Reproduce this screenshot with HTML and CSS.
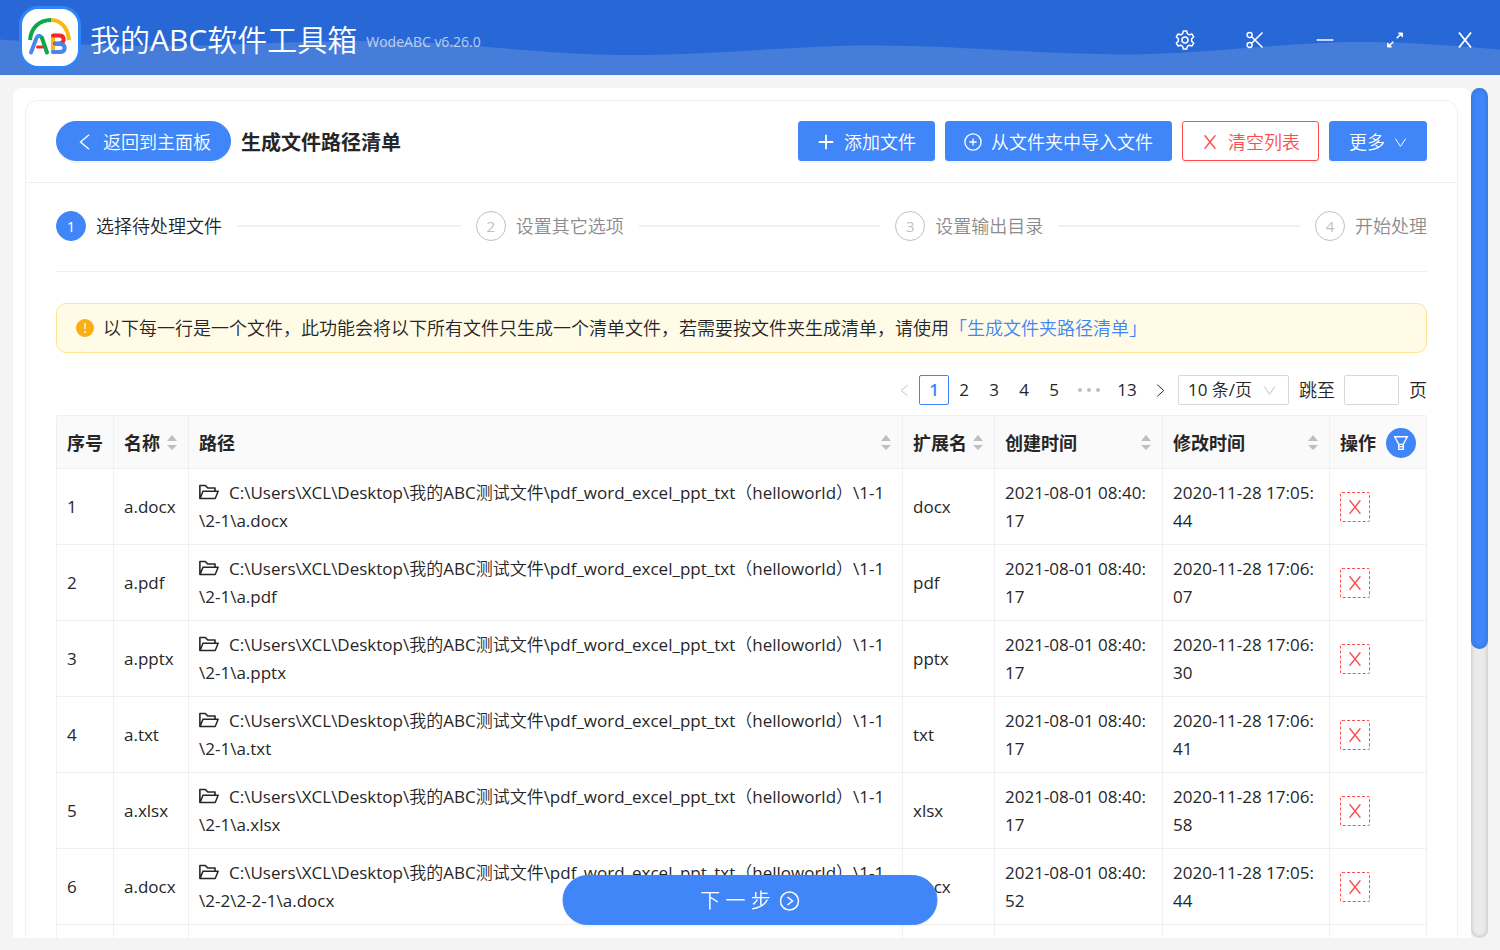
FILE: index.html
```html
<!DOCTYPE html>
<html lang="zh-CN">
<head>
<meta charset="UTF-8">
<meta name="viewport" content="width=device-width, initial-scale=1.0">
<title>我的ABC软件工具箱</title>
<link rel="stylesheet" href="styles.css">
</head>
<body>
    <!-- shared icons -->
    <svg class="sprite" aria-hidden="true">
        <symbol id="i-close" viewBox="0 0 20 20"><path d="M4 2.500l12 15M16 2.500L4 17.500" /></symbol>
        <symbol id="i-left" viewBox="0 0 20 20"><path d="M14.500 2L5 10l9.500 8" /></symbol>
        <symbol id="i-right" viewBox="0 0 20 20"><path d="M5 1l10 9-10 9" /></symbol>
        <symbol id="i-down" viewBox="0 0 20 20"><path d="M2 4l8 12 8-12" /></symbol>
        <symbol id="i-sort" viewBox="0 0 12 18"><path d="M6 1l5 6H1zM6 16l5-5H1z" /></symbol>
        <symbol id="i-folder" viewBox="60 60 904 904"><path d="M928 444H820V330.4c0-17.7-14.3-32-32-32H473L355.7 186.2a8.15 8.15 0 00-5.5-2.2H96c-17.7 0-32 14.3-32 32v592c0 17.7 14.3 32 32 32h698c13 0 24.8-7.9 29.7-20l134-332c1.5-3.8 2.3-7.9 2.3-12 0-17.7-14.3-32-32-32zM136 256h188.5l119.6 114.4H748V444H238c-13 0-24.8 7.9-29.7 20L136 643.2V256zm635.3 512H159l103.3-256h612.4L771.3 768z" /></symbol>
    </svg>

    <header class="topbar">
        <svg class="wave" viewBox="0 0 1500 75" preserveAspectRatio="none" aria-hidden="true">
            <path d="M0 39.500C50 43 90 46 150 46C230 46 290 41 370 41C460 41 540 55 630 55C720 55 790 45.500 875 45.500C960 45.500 1040 54.500 1125 54.500C1210 54.500 1280 42 1365 42C1410 42 1455 46 1500 49.500V75H0z" />
        </svg>
        <svg class="logo" viewBox="0 0 62 64" fill="none" stroke-linecap="round" stroke-linejoin="round" aria-hidden="true">
            <rect x="0" y="0" width="62" height="63" rx="19" fill="#2f85f8" />
            <rect x="3" y="3" width="56" height="57" rx="16" fill="#fff" />
            <path d="M11 34C12 22 20 14 32 14" stroke="#0da84b" stroke-width="4" stroke-linecap="butt" />
            <path d="M32 14C42 14 49 22 50 34" stroke="#fbb90b" stroke-width="4" stroke-linecap="butt" />
            <path d="M12 46.500L17.500 32Q20 27.500 23 32" stroke="#4b86ea" stroke-width="4" />
            <path d="M23 32L28 46.500" stroke="#0da84b" stroke-width="4" />
            <path d="M18.500 41h5" stroke="#f22727" stroke-width="3" />
            <path d="M34 31V46" stroke="#fbb90b" stroke-width="4" />
            <path d="M34 29.500h6c6 0 6 7 1 8h-5" stroke="#f22727" stroke-width="4" />
            <path d="M37 38h5c5 1 5 8-1 8h-7" stroke="#4b86ea" stroke-width="4" />
        </svg>
        <h1 class="brand">我的ABC软件工具箱</h1>
        <span class="version">WodeABC v6.26.0</span>
        <nav class="window_tools">
            <button type="button" aria-label="设置">
                <svg viewBox="0 0 24 24"><path d="M10 1.200H14L14.800 4.400L17.200 5.800L20.400 4.900L22.400 8.300L20 10.600V13.400L22.400 15.700L20.400 19.100L17.200 18.200L14.800 19.600L14 22.800H10L9.200 19.600L6.800 18.200L3.600 19.100L1.600 15.700L4 13.400V10.600L1.600 8.300L3.600 4.900L6.800 5.800L9.200 4.400z" /><circle cx="12" cy="12" r="3.600" /></svg>
            </button>
            <button type="button" aria-label="截图">
                <svg viewBox="0 0 24 24"><circle cx="5.500" cy="6" r="3" /><circle cx="5.500" cy="18" r="3" /><path d="M8 8l13 13M8 16L21 3" /></svg>
            </button>
            <button type="button" aria-label="最小化">
                <svg viewBox="0 0 24 24"><path d="M2 12h20" /></svg>
            </button>
            <button type="button" aria-label="最大化">
                <svg viewBox="0 0 24 24"><path d="M14 10l5-5M10 14l-5 5" /><path class="solid" d="M16 3.500h5V8.500zM3 15.500v5h5z" /></svg>
            </button>
            <button type="button" aria-label="关闭">
                <svg><use href="#i-close" /></svg>
            </button>
        </nav>
    </header>

    <main class="main">
        <div class="view">
            <section class="card">
                <div class="card_head">
                    <button type="button" class="btn btn_back"><svg class="icon"><use href="#i-left" /></svg>返回到主面板</button>
                    <h2>生成文件路径清单</h2>
                    <div class="actions">
                        <button type="button" class="btn"><svg class="icon plus" viewBox="0 0 20 20"><path d="M10 2v16M2 10h16" /></svg>添加文件</button>
                        <button type="button" class="btn"><svg class="icon" viewBox="0 0 20 20"><circle cx="10" cy="10" r="9" /><path d="M10 6v8M6 10h8" /></svg>从文件夹中导入文件</button>
                        <button type="button" class="btn btn_danger"><svg class="icon"><use href="#i-close" /></svg>清空列表</button>
                        <button type="button" class="btn btn_more">更多<svg class="icon small"><use href="#i-down" /></svg></button>
                    </div>
                </div>

                <div class="card_body">
                    <ol class="steps">
                        <li class="step active"><span class="step_no">1</span>选择待处理文件</li>
                        <li class="step"><span class="step_no">2</span>设置其它选项</li>
                        <li class="step"><span class="step_no">3</span>设置输出目录</li>
                        <li class="step"><span class="step_no">4</span>开始处理</li>
                    </ol>

                    <div class="notice">
                        <svg viewBox="0 0 18 18" aria-hidden="true"><circle cx="9" cy="9" r="9" fill="#faad14" /><path d="M9 4v6M9 12v2" stroke="#fffbe6" stroke-width="1.500" /></svg>
                        <p>以下每一行是一个文件，此功能会将以下所有文件只生成一个清单文件，若需要按文件夹生成清单，请使用<a href="#">「生成文件夹路径清单」</a></p>
                    </div>

                    <div class="pager">
                        <button type="button" class="page arrow" aria-label="上一页" disabled><svg class="icon small"><use href="#i-left" /></svg></button>
                        <button type="button" class="page current">1</button>
                        <button type="button" class="page">2</button>
                        <button type="button" class="page">3</button>
                        <button type="button" class="page">4</button>
                        <button type="button" class="page">5</button>
                        <button type="button" class="page dots" aria-label="向后 5 页"><svg viewBox="0 0 24 6"><circle cx="3" cy="3" r="2" /><circle cx="12" cy="3" r="2" /><circle cx="21" cy="3" r="2" /></svg></button>
                        <button type="button" class="page">13</button>
                        <button type="button" class="page arrow" aria-label="下一页"><svg class="icon small"><use href="#i-right" /></svg></button>
                        <span class="page_size">
                            <select aria-label="每页条数"><option>10 条/页</option><option>20 条/页</option></select>
                            <svg class="icon small"><use href="#i-down" /></svg>
                        </span>
                        <label for="jump">跳至</label>
                        <input type="text" id="jump">
                        <span>页</span>
                    </div>

                    <table class="files">
                        <colgroup>
                            <col class="c_no"><col class="c_name"><col><col class="c_ext"><col class="c_created"><col class="c_changed"><col class="c_op">
                        </colgroup>
                        <thead>
                            <tr>
                                <th>序号</th>
                                <th><div class="th">名称<svg><use href="#i-sort" /></svg></div></th>
                                <th><div class="th">路径<svg><use href="#i-sort" /></svg></div></th>
                                <th><div class="th">扩展名<svg><use href="#i-sort" /></svg></div></th>
                                <th><div class="th">创建时间<svg><use href="#i-sort" /></svg></div></th>
                                <th><div class="th">修改时间<svg><use href="#i-sort" /></svg></div></th>
                                <th><div class="th">操作<button type="button" class="filter" aria-label="筛选"><svg viewBox="0 0 20 20"><path d="M3 3h14l-4.500 8.500h-5zM7.500 11.500V17h5v-5.500M7.500 14h5" /></svg></button></div></th>
                            </tr>
                        </thead>
                        <tbody>
                            <tr>
                                <td>1</td>
                                <td>a.docx</td>
                                <td><svg class="folder"><use href="#i-folder" /></svg>C:\Users\XCL\Desktop\我的ABC测试文件\pdf_word_excel_ppt_txt（helloworld）\1-1<br>\2-1\a.docx</td>
                                <td>docx</td>
                                <td>2021-08-01 08:40:<br>17</td>
                                <td>2020-11-28 17:05:<br>44</td>
                                <td><button type="button" class="remove" aria-label="移除"><svg><use href="#i-close" /></svg></button></td>
                            </tr>
                            <tr>
                                <td>2</td>
                                <td>a.pdf</td>
                                <td><svg class="folder"><use href="#i-folder" /></svg>C:\Users\XCL\Desktop\我的ABC测试文件\pdf_word_excel_ppt_txt（helloworld）\1-1<br>\2-1\a.pdf</td>
                                <td>pdf</td>
                                <td>2021-08-01 08:40:<br>17</td>
                                <td>2020-11-28 17:06:<br>07</td>
                                <td><button type="button" class="remove" aria-label="移除"><svg><use href="#i-close" /></svg></button></td>
                            </tr>
                            <tr>
                                <td>3</td>
                                <td>a.pptx</td>
                                <td><svg class="folder"><use href="#i-folder" /></svg>C:\Users\XCL\Desktop\我的ABC测试文件\pdf_word_excel_ppt_txt（helloworld）\1-1<br>\2-1\a.pptx</td>
                                <td>pptx</td>
                                <td>2021-08-01 08:40:<br>17</td>
                                <td>2020-11-28 17:06:<br>30</td>
                                <td><button type="button" class="remove" aria-label="移除"><svg><use href="#i-close" /></svg></button></td>
                            </tr>
                            <tr>
                                <td>4</td>
                                <td>a.txt</td>
                                <td><svg class="folder"><use href="#i-folder" /></svg>C:\Users\XCL\Desktop\我的ABC测试文件\pdf_word_excel_ppt_txt（helloworld）\1-1<br>\2-1\a.txt</td>
                                <td>txt</td>
                                <td>2021-08-01 08:40:<br>17</td>
                                <td>2020-11-28 17:06:<br>41</td>
                                <td><button type="button" class="remove" aria-label="移除"><svg><use href="#i-close" /></svg></button></td>
                            </tr>
                            <tr>
                                <td>5</td>
                                <td>a.xlsx</td>
                                <td><svg class="folder"><use href="#i-folder" /></svg>C:\Users\XCL\Desktop\我的ABC测试文件\pdf_word_excel_ppt_txt（helloworld）\1-1<br>\2-1\a.xlsx</td>
                                <td>xlsx</td>
                                <td>2021-08-01 08:40:<br>17</td>
                                <td>2020-11-28 17:06:<br>58</td>
                                <td><button type="button" class="remove" aria-label="移除"><svg><use href="#i-close" /></svg></button></td>
                            </tr>
                            <tr>
                                <td>6</td>
                                <td>a.docx</td>
                                <td><svg class="folder"><use href="#i-folder" /></svg>C:\Users\XCL\Desktop\我的ABC测试文件\pdf_word_excel_ppt_txt（helloworld）\1-1<br>\2-2\2-2-1\a.docx</td>
                                <td>docx</td>
                                <td>2021-08-01 08:40:<br>52</td>
                                <td>2020-11-28 17:05:<br>44</td>
                                <td><button type="button" class="remove" aria-label="移除"><svg><use href="#i-close" /></svg></button></td>
                            </tr>
                            <tr class="blank"><td></td><td></td><td></td><td></td><td></td><td></td><td></td></tr>
                        </tbody>
                    </table>
                </div>
            </section>
        </div>
        <div class="track" aria-hidden="true"><div class="thumb"></div></div>
    </main>

    <button type="button" class="btn btn_next">下 一 步<svg viewBox="0 0 20 20"><circle cx="10" cy="10" r="9" /><path d="M8 6l5 4-5 4" /></svg></button>
</body>
</html>
```
FILE: styles.css
```css
*,
*::before,
*::after {
    box-sizing: border-box;
}
body {
    display: flex;
    flex-direction: column;
    height: 100vh;
    margin: 0;
    overflow: hidden;
    background: #f4f4f4;
    color: #262626;
    font: 400 18px/28px "Open Sans", "Noto Sans CJK SC DemiLight", "Noto Sans CJK SC", sans-serif;
}
button,
input,
select {
    font: inherit;
    color: inherit;
}
button {
    padding: 0;
    border: 0;
    background: none;
    cursor: pointer;
}
h1,
h2,
p,
ol {
    margin: 0;
    padding: 0;
}
svg {
    flex: none;
}
.sprite {
    position: absolute;
    width: 0;
    height: 0;
}

/* title bar */
.topbar {
    position: relative;
    display: flex;
    flex: none;
    align-items: center;
    height: 75px;
    padding: 0 0 0 19px;
    background: #2868d6;
    color: #fff;
}
.wave {
    position: absolute;
    top: 0;
    left: 0;
    width: 100%;
    height: 100%;
    fill: rgba(255, 255, 255, .14);
}
.logo {
    position: relative;
    width: 62px;
    height: 64px;
}
.brand {
    position: relative;
    margin: 4px 0 0 9px;
    font-size: 30px;
    line-height: 40px;
    font-weight: 400;
}
.version {
    position: relative;
    margin: 8px 0 0 9px;
    font-size: 14px;
    line-height: 20px;
    opacity: .65;
}
.window_tools {
    position: relative;
    display: flex;
    margin-left: auto;
}
.window_tools button {
    display: flex;
    align-items: center;
    justify-content: center;
    width: 70px;
    height: 74px;
    padding-top: 4px;
}
.window_tools svg {
    width: 20px;
    height: 20px;
    fill: none;
    stroke: #fff;
    stroke-width: 1.8;
    stroke-linejoin: round;
}
.window_tools .solid {
    fill: #fff;
    stroke-width: 1;
}

/* scroll area */
.main {
    display: flex;
    flex: 1;
    min-height: 0;
    margin: 13px 12px 12px 13px;
}
.view {
    flex: 1;
    min-width: 0;
    padding: 12px 13px 0 12px;
    overflow: hidden;
    background: #fff;
    border-radius: 8px 8px 0 0;
}
.track {
    width: 17px;
    border-radius: 9px;
    background: #ebebeb;
    box-shadow: inset 0 0 5px rgba(0, 0, 0, .2);
}
.thumb {
    height: 66%;
    border-radius: 9px;
    background: #4086f8;
    box-shadow: inset 0 0 5px rgba(0, 0, 0, .2);
}

.card {
    border: 1px solid #f0f0f0;
    border-radius: 12px;
}
.card_head {
    display: flex;
    align-items: center;
    padding: 20px 30px 21px;
    border-bottom: 1px solid #f0f0f0;
}
.card_head h2 {
    padding-top: 4px;
    margin-left: 10px;
    font-size: 20px;
}
.card_body {
    padding: 0 30px;
}
.actions {
    display: flex;
    gap: 10px;
    margin-left: auto;
}

/* headings keep the full weight family */
.card_head h2,
.files th {
    font-family: "Open Sans", "Noto Sans CJK SC", sans-serif;
    font-weight: 700;
}

.btn {
    display: flex;
    align-items: center;
    justify-content: center;
    gap: 9px;
    height: 40px;
    padding: 2px 18px 0;
    border: 1px solid #4086f8;
    border-radius: 3px;
    background: #4086f8;
    color: #fff;
    box-shadow: 0 2px 0 rgba(0, 0, 0, .04);
}
.btn_back {
    padding: 2px 19px 0;
    border-radius: 20px;
}
.btn_more {
    padding: 2px 19px 0;
}
.btn_danger {
    border-color: #ff4d4f;
    background: #fff;
    color: #ff4d4f;
}
.icon {
    width: 18px;
    height: 18px;
    fill: none;
    stroke: currentColor;
    stroke-width: 1.5;
}
.icon.plus {
    stroke-width: 2;
}
.icon.small {
    width: 13px;
    height: 13px;
}

.steps {
    display: flex;
    gap: 15px;
    padding: 28px 0 30px;
    border-bottom: 1px solid #f0f0f0;
    list-style: none;
}
.step {
    display: flex;
    flex: 1;
    align-items: center;
    gap: 10px;
    height: 30px;
    color: #8c8c8c;
    white-space: nowrap;
}
.step::after {
    content: "";
    flex: 1;
    height: 2px;
    margin-left: 5px;
    background: #f0f0f0;
}
.step:last-child {
    flex: none;
}
.step:last-child::after {
    display: none;
}
.step_no {
    width: 30px;
    border: 1px solid #bfbfbf;
    border-radius: 50%;
    color: #bfbfbf;
    font-size: 15px;
    line-height: 28px;
    text-align: center;
}
.step.active {
    color: #262626;
}
.step.active .step_no {
    border-color: #4086f8;
    background: #4086f8;
    color: #fff;
}

.notice {
    display: flex;
    align-items: center;
    gap: 9px;
    height: 50px;
    margin: 31px 0 22px;
    padding: 0 19px;
    border: 1px solid #ffe58f;
    border-radius: 10px;
    background: #fffbe6;
    white-space: nowrap;
}
.notice svg {
    width: 18px;
    height: 18px;
}
.notice a {
    color: #4086f8;
    text-decoration: none;
}

.pager {
    display: flex;
    align-items: center;
    justify-content: flex-end;
    margin-bottom: 10px;
}
.page {
    display: flex;
    align-items: center;
    justify-content: center;
    width: 30px;
    height: 30px;
    font-size: 17px;
}
.page.current {
    border: 1px solid #4086f8;
    border-radius: 2px;
    color: #4086f8;
    font-weight: 600;
}
.page.dots {
    width: 40px;
}
.page.dots svg {
    width: 24px;
    fill: #bfbfbf;
}
.page.dots + .page {
    width: 36px;
}
.page:disabled {
    color: #bfbfbf;
}
.page_size {
    position: relative;
    margin: 0 10px 0 3px;
}
.page_size select {
    display: block;
    width: 111px;
    height: 30px;
    padding: 0 9px;
    border: 1px solid #d9d9d9;
    border-radius: 2px;
    background: #fff;
    font-size: 17px;
    appearance: none;
}
.page_size svg {
    position: absolute;
    top: 9px;
    right: 13px;
    color: #bfbfbf;
    pointer-events: none;
}
.pager input {
    width: 55px;
    height: 30px;
    margin: 0 10px 0 9px;
    border: 1px solid #d9d9d9;
    border-radius: 2px;
}

.files {
    width: 100%;
    table-layout: fixed;
    border-collapse: separate;
    border-spacing: 0;
    border-top: 1px solid #f0f0f0;
    border-left: 1px solid #f0f0f0;
    border-radius: 3px 3px 0 0;
    white-space: nowrap;
}
.c_no {
    width: 57px;
}
.c_name {
    width: 75px;
}
.c_ext {
    width: 92px;
}
.c_created {
    width: 168px;
}
.c_changed {
    width: 167px;
}
.c_op {
    width: 97px;
}
.files th,
.files td {
    padding: 10px 10px 9px;
    border-right: 1px solid #f0f0f0;
    border-bottom: 1px solid #f0f0f0;
    text-align: left;
}
.files th {
    height: 53px;
    background: #fafafa;
}
.files td {
    font-size: 17px;
}
.th {
    display: flex;
    align-items: center;
    justify-content: space-between;
}
.th > svg {
    width: 12px;
    height: 18px;
    fill: #bfbfbf;
}
.filter {
    display: flex;
    align-items: center;
    justify-content: center;
    width: 30px;
    height: 30px;
    border-radius: 50%;
    background: #4086f8;
}
.filter svg {
    width: 18px;
    height: 18px;
    fill: none;
    stroke: #fff;
    stroke-width: 1.5;
}
.folder {
    width: 20px;
    height: 20px;
    margin-right: 10px;
    vertical-align: -3px;
    fill: currentColor;
}
.remove {
    display: flex;
    align-items: center;
    justify-content: center;
    width: 30px;
    height: 30px;
    border: 1px dashed #ff4d4f;
    border-radius: 2px;
    color: #ff4d4f;
}
.remove svg {
    width: 18px;
    height: 18px;
    stroke: currentColor;
    stroke-width: 1.5;
}
.blank td {
    height: 76px;
}

.btn_next {
    position: fixed;
    bottom: 25px;
    left: 50%;
    width: 25%;
    height: 50px;
    border-radius: 25px;
    font-size: 20px;
    transform: translateX(-50%);
}
.btn_next svg {
    width: 20px;
    height: 20px;
    fill: none;
    stroke: currentColor;
    stroke-width: 1.5;
}
```
